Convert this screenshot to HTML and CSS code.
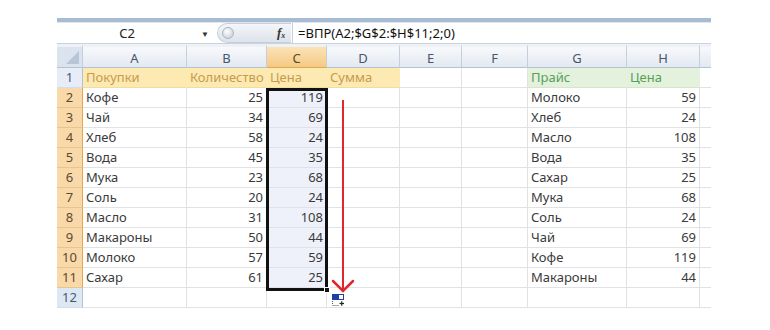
FILE: index.html
```html
<!DOCTYPE html>
<html lang="ru">
<head>
  <meta charset="UTF-8" />
  <title>ВПР</title>
  <link rel="stylesheet" href="styles.css">
</head>
<body>

  <div class="book">
    <!-- formula bar -->
    <div class="formula-bar">
      <div class="name-box">C2</div>
      <div class="name-arrow">&#9660;</div>
      <div class="splitter"><span class="knob"></span></div>
      <div class="fx">f<sub>x</sub></div>
      <div class="formula">=ВПР(A2;$G$2:$H$11;2;0)</div>
    </div>

    <!-- sheet -->
    <div class="sheet">
      <div class="corner"><span class="tri"></span></div>
      <div class="col-hd">A</div>
      <div class="col-hd">B</div>
      <div class="col-hd sel">C</div>
      <div class="col-hd">D</div>
      <div class="col-hd">E</div>
      <div class="col-hd">F</div>
      <div class="col-hd">G</div>
      <div class="col-hd">H</div>
      <div class="col-hd last"></div>
    </div>

    <div class="sheet" id="rows"></div>

    <div class="selection"><span class="handle"></span></div>

    <svg class="arrow" width="24" height="196" viewBox="0 0 24 196" aria-hidden="true">
      <line x1="12" y1="0" x2="12" y2="190" stroke="#e3262d" stroke-width="2"/>
      <polyline points="2,181 12,191 22,181" fill="none" stroke="#e3262d" stroke-width="2.5" stroke-linecap="round"/>
    </svg>

    <svg class="fill-opt" width="14" height="14" viewBox="0 0 14 14" aria-hidden="true">
      <rect x="1.5" y="1.5" width="6" height="5" fill="#1f3fa8" stroke="#1f3fa8"/>
      <rect x="7.5" y="1.5" width="5" height="5" fill="#fff" stroke="#1f3fa8"/>
      <line x1="1.5" y1="8" x2="1.5" y2="12" stroke="#555" stroke-dasharray="1 1"/>
      <line x1="1.5" y1="12.5" x2="8" y2="12.5" stroke="#555" stroke-dasharray="1 1"/>
      <line x1="8.5" y1="10.5" x2="13" y2="10.5" stroke="#222" stroke-width="1.2"/>
      <line x1="10.75" y1="8.2" x2="10.75" y2="12.8" stroke="#222" stroke-width="1.2"/>
    </svg>
  </div>

  <script>
    const left = [
      ['Покупки', 'Количество', 'Цена', 'Сумма'],
      ['Кофе', 25, 119], ['Чай', 34, 69], ['Хлеб', 58, 24], ['Вода', 45, 35],
      ['Мука', 23, 68], ['Соль', 20, 24], ['Масло', 31, 108], ['Макароны', 50, 44],
      ['Молоко', 57, 59], ['Сахар', 61, 25], ['', '', '']
    ];
    const right = [
      ['Прайс', 'Цена'], ['Молоко', 59], ['Хлеб', 24], ['Масло', 108], ['Вода', 35],
      ['Сахар', 25], ['Мука', 68], ['Соль', 24], ['Чай', 69], ['Кофе', 119],
      ['Макароны', 44], ['', '']
    ];
    const rows = document.getElementById('rows');

    function cell(text, cls) {
      const d = document.createElement('div');
      d.className = 'cell ' + (cls || '');
      d.textContent = text;
      rows.appendChild(d);
    }

    left.forEach((r, i) => {
      const n = i + 1;
      const head = n === 1;
      let hd = 'row-hd';
      if (n >= 2 && n <= 11) hd += ' sel';
      if (n === 12) hd += ' cur';
      cell(n, hd);
      cell(r[0], head ? 'yellow' : '');
      cell(r[1], head ? 'yellow' : 'num');
      cell(r[2], head ? 'yellow' : (n <= 11 ? 'num picked' : 'num'));
      cell(head ? r[3] : '', head ? 'yellow' : '');
      cell('', '');
      cell('', '');
      cell(right[i][0], head ? 'green' : '');
      cell(right[i][1], head ? 'green' : 'num');
      cell('', 'last');
    });
  </script>

</body>
</html>
```

FILE: styles.css
```css
/* Reset */
* {
  margin: 0;
  padding: 0;
  box-sizing: border-box;
}

html, body {
  width: 770px;
  height: 330px;
  overflow: hidden;
  background: #ffffff;
  font-family: 'Noto Sans', 'Open Sans', sans-serif;
  font-size: 13px;
  color: #3a3a3a;
}

.book {
  position: relative;
  width: 654px;
  margin: 18px 0 0 57px;
  border-top: 4px solid #a7bcd3;
}

/* Formula bar */
.formula-bar {
  display: flex;
  align-items: center;
  height: 22px;
  background: #ffffff;
  border-bottom: 1px solid #c9d3df;
  border-top: 1px solid #dfe6ee;
}

.name-box {
  width: 136px;
  text-align: center;
  color: #222;
  padding-left: 4px;
}

.name-arrow {
  width: 24px;
  font-size: 8px;
  color: #333;
  text-align: center;
}

.splitter {
  width: 74px;
  height: 20px;
  border-radius: 10px 0 0 10px;
  background: linear-gradient(#f4f6f9, #dde3ea);
  border: 1px solid #c7d0da;
  border-right: none;
  position: relative;
}

.knob {
  position: absolute;
  left: 4px;
  top: 3px;
  width: 12px;
  height: 12px;
  border-radius: 50%;
  background: radial-gradient(circle at 40% 35%, #ffffff, #c0c8d2);
  border: 1px solid #aab5c2;
}

.fx {
  width: 12px;
  height: 20px;
  margin-left: -14px;
  font-family: 'Liberation Serif', serif;
  font-style: italic;
  font-weight: bold;
  font-size: 13px;
  color: #333;
  line-height: 19px;
  z-index: 1;
}

.fx sub {
  font-size: 8px;
  vertical-align: -1px;
}

.formula {
  flex: 1;
  height: 21px;
  line-height: 20px;
  border-left: 1px solid #c7d0da;
  padding-left: 5px;
  margin-left: 3px;
  color: #111;
}

/* Grid */
.sheet {
  display: grid;
  grid-template-columns: 26px 104px 80px 60px 73px 62px 66px 99px 73px 11px;
}

.corner,
.col-hd {
  height: 24px;
  line-height: 23px;
  text-align: center;
  color: #4a556a;
  background: linear-gradient(#f7f9fc, #e3e9f1);
  border-right: 1px solid #c5cfdc;
  border-bottom: 1px solid #b5c2d2;
  border-top: 3px solid #eef2f7;
}

.col-hd.sel {
  background: linear-gradient(#fbe3b5, #f6c985);
  color: #5a4a30;
  border-bottom-color: #e1a94d;
}

.col-hd.last {
  border-right: none;
}

.corner {
  position: relative;
  background: #dbe4ee;
}

.tri {
  position: absolute;
  right: 3px;
  bottom: 3px;
  border-left: 13px solid transparent;
  border-bottom: 13px solid #b7c5d6;
}

.cell {
  height: 20px;
  line-height: 19px;
  padding: 0 3px;
  border-right: 1px solid #e0e2e5;
  border-bottom: 1px solid #e0e2e5;
  white-space: nowrap;
  overflow: hidden;
}

.cell.num {
  text-align: right;
}

.cell.last {
  border-right: none;
}

.row-hd {
  text-align: center;
  padding: 0;
  color: #4c5870;
  background: #e6edf6;
  border-right: 1px solid #b5c2d2;
  border-bottom: 1px solid #d3dce8;
}

.row-hd.sel {
  background: #f9d9aa;
  color: #5a4a30;
  border-bottom-color: #eac58b;
  border-right-color: #e1a94d;
}

.row-hd.cur {
  background: #dde8f5;
}

.yellow {
  background: #fde9b2;
  color: #c89b4c;
  border-right-color: #fde9b2;
  border-bottom-color: #f3dca0;
}

.green {
  background: #e4f1dc;
  color: #55a05a;
  border-right-color: #e4f1dc;
  border-bottom-color: #d4e7c9;
}

.picked {
  background: #eef1f9;
}

/* Selection frame over C2:C11 */
.selection {
  position: absolute;
  left: 209px;
  top: 66px;
  width: 62px;
  height: 203px;
  border: 3px solid #111;
}

.handle {
  position: absolute;
  right: -5px;
  bottom: -5px;
  width: 6px;
  height: 6px;
  background: #111;
  border: 1px solid #fff;
}

.arrow {
  position: absolute;
  left: 274px;
  top: 78px;
}

.fill-opt {
  position: absolute;
  left: 274px;
  top: 271px;
}
```
